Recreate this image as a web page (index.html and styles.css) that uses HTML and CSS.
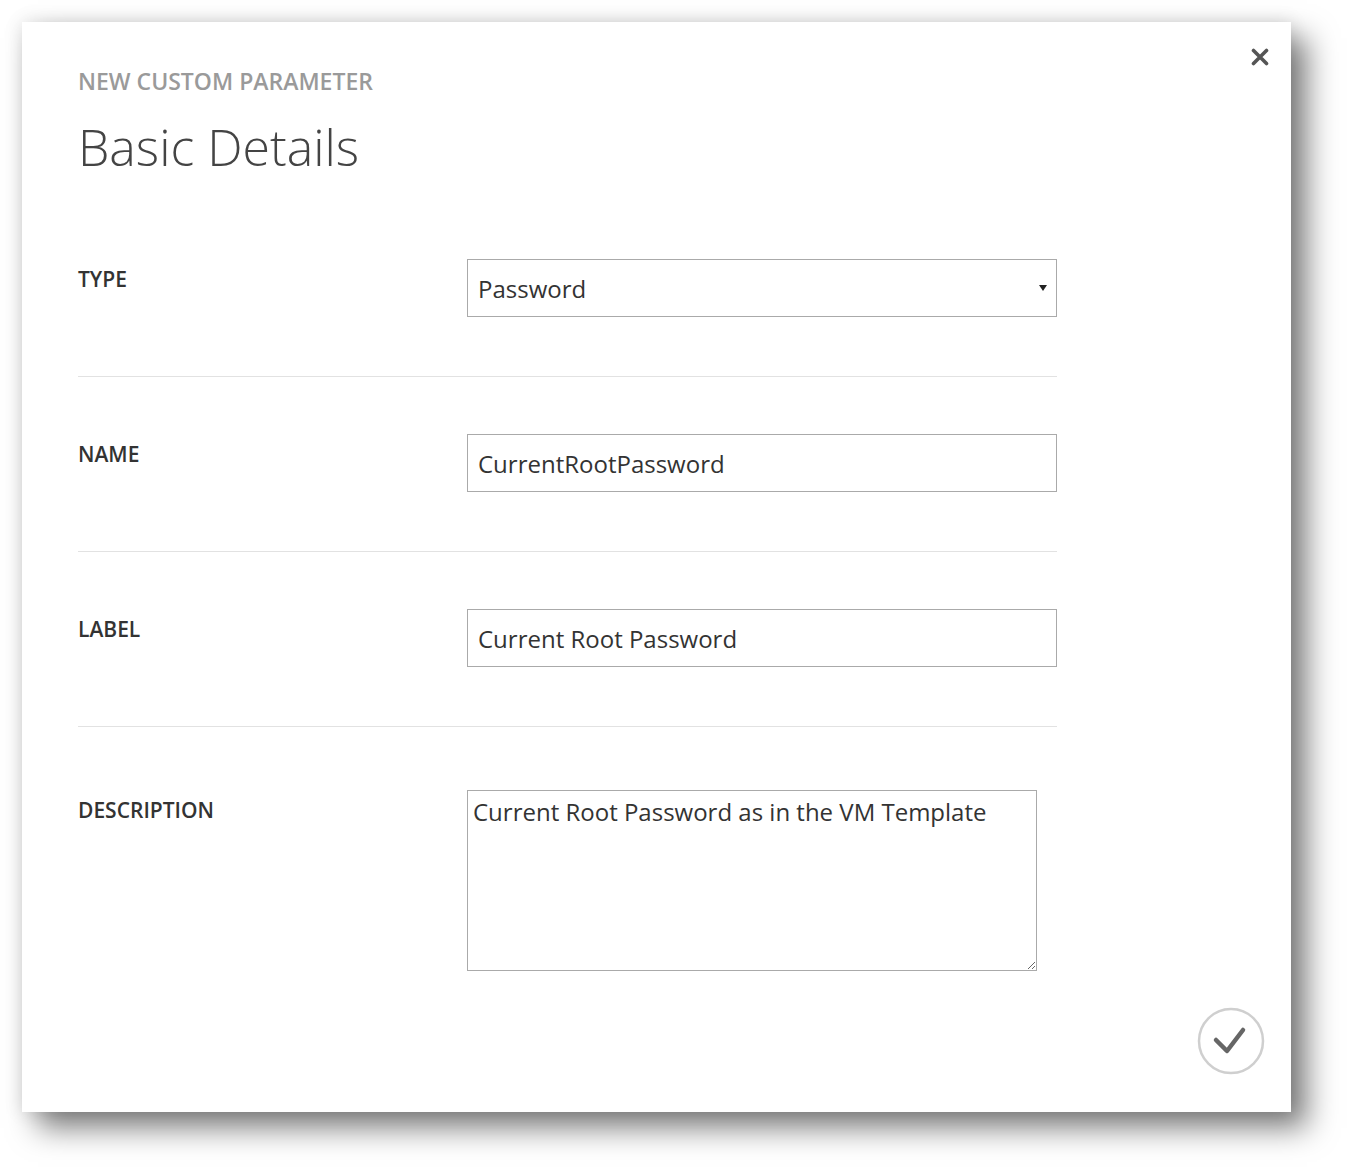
FILE: index.html
```html
<!DOCTYPE html>
<html lang="en">
<head>
    <meta charset="UTF-8">
    <meta name="viewport" content="width=device-width, initial-scale=1.0">
    <title>New Custom Parameter</title>
    <link rel="stylesheet" href="styles.css">
</head>
<body>
    <div class="dialog">
        <button class="close" title="Close">
            <svg width="18" height="18" viewBox="0 0 18 18">
                <path d="M2.5 2.5 L15.5 15.5 M15.5 2.5 L2.5 15.5" stroke="#555" stroke-width="3.6" stroke-linecap="round"/>
            </svg>
        </button>

        <div class="subtitle">NEW CUSTOM PARAMETER</div>
        <h1>Basic Details</h1>

        <div class="form">
            <div class="row">
                <label for="type">TYPE</label>
                <div class="select-wrap">
                    <select id="type">
                        <option>Password</option>
                        <option>String</option>
                        <option>Number</option>
                    </select>
                </div>
            </div>

            <div class="row">
                <label for="name">NAME</label>
                <input type="text" id="name" value="CurrentRootPassword">
            </div>

            <div class="row">
                <label for="label">LABEL</label>
                <input type="text" id="label" value="Current Root Password">
            </div>

            <div class="row last">
                <label for="description">DESCRIPTION</label>
                <textarea id="description">Current Root Password as in the VM Template</textarea>
            </div>
        </div>

        <div class="footer">
            <button class="ok" title="OK">
                <svg width="70" height="70" viewBox="0 0 70 70">
                    <circle cx="35" cy="35" r="32" fill="none" stroke="#cfcfcf" stroke-width="2.5"/>
                    <path d="M20 34 L31 45 L47 24" fill="none" stroke="#666" stroke-width="4.5" stroke-linecap="round" stroke-linejoin="round"/>
                </svg>
            </button>
        </div>
    </div>
</body>
</html>
```

FILE: styles.css
```css
body {
    margin: 0;
    padding: 22px 0 55px 22px;
    background: #fff;
    font-family: "Open Sans", Arial, sans-serif;
    color: #333;
}
.dialog {
    position: relative;
    box-sizing: border-box;
    width: 1269px;
    height: 1090px;
    padding: 44px 0 0 56px;
    background: #fff;
    box-shadow: 16px 16px 28px rgba(0, 0, 0, 0.5), 0 0 18px rgba(0, 0, 0, 0.12);
}
.close {
    position: absolute;
    top: 26px;
    right: 22px;
    padding: 0;
    border: none;
    background: none;
    cursor: pointer;
}
.subtitle {
    font-size: 23px;
    font-weight: 600;
    color: #9a9a9a;
    line-height: 30px;
}
h1 {
    margin: 16px 0 0;
    font-size: 50px;
    font-weight: 300;
    line-height: 70px;
    color: #444;
}
.form {
    width: 979px;
    margin-top: 77px;
}
.row {
    display: grid;
    grid-template-columns: 389px 590px;
    align-items: start;
    padding: 57px 0 59px;
    border-bottom: 1px solid #e2e2e2;
}
.row:first-child {
    padding-top: 0;
}
.row.last {
    padding-top: 63px;
    border-bottom: none;
}
label {
    margin-top: 10px;
    font-size: 21px;
    font-weight: 600;
    line-height: 20px;
    color: #333;
}
input, select, textarea {
    box-sizing: border-box;
    font-family: "Open Sans", Arial, sans-serif;
    font-size: 24px;
    color: #333;
    border: 1px solid #aaa;
    background: #fff;
    outline: none;
}
input, select {
    width: 590px;
    height: 58px;
    padding: 0 10px;
}
.select-wrap {
    position: relative;
}
select {
    appearance: none;
    -webkit-appearance: none;
    border-radius: 0;
}
.select-wrap::after {
    content: "";
    position: absolute;
    right: 10px;
    top: 26px;
    border-left: 4px solid transparent;
    border-right: 4px solid transparent;
    border-top: 6px solid #222;
    pointer-events: none;
}
textarea {
    width: 570px;
    height: 181px;
    padding: 4px 5px;
    line-height: 34px;
    resize: both;
}
.footer {
    position: absolute;
    right: 25px;
    bottom: 31px;
}
.ok {
    padding: 0;
    border: none;
    background: none;
    cursor: pointer;
}
.ok svg {
    display: block;
}
```
